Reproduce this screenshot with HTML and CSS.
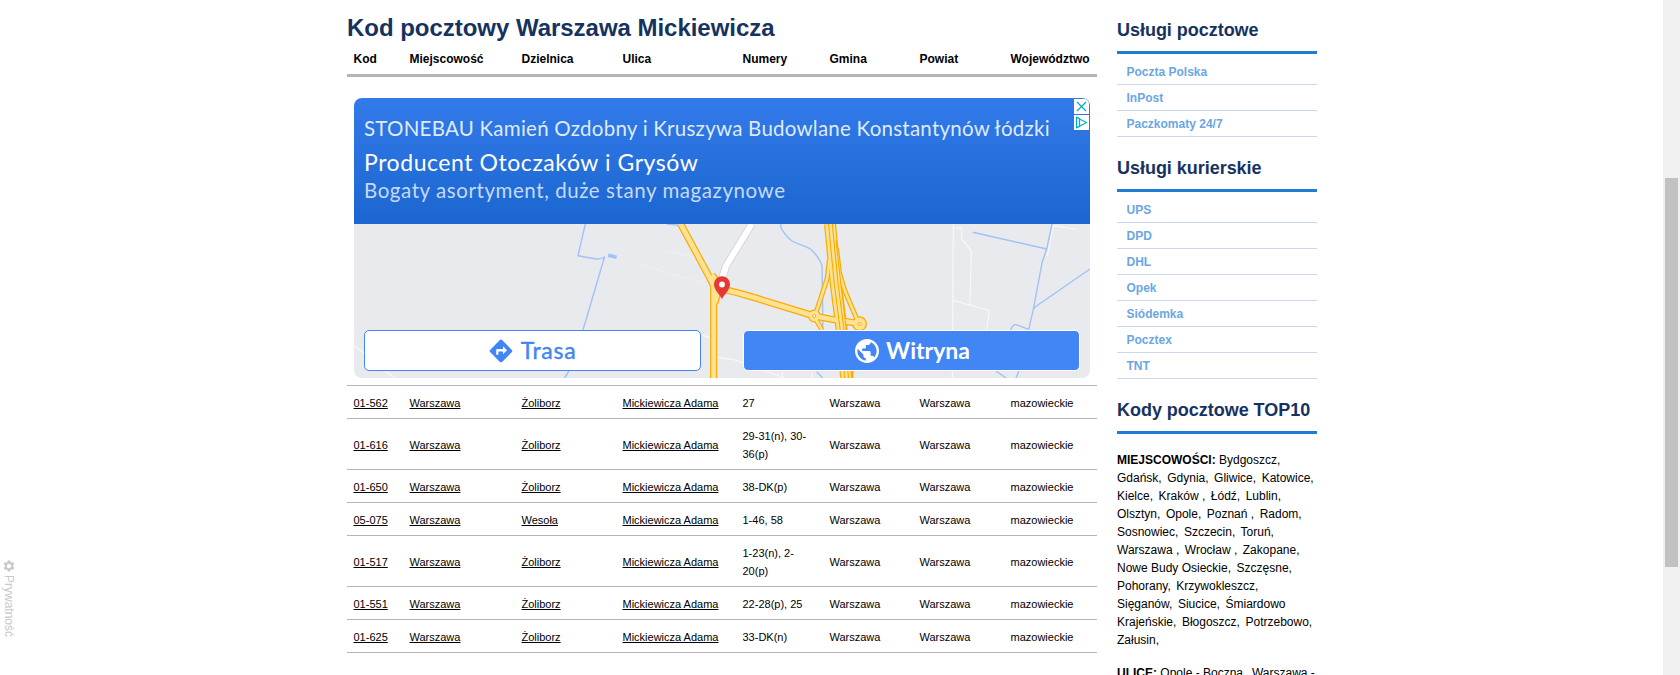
FILE: index.html
```html
<!DOCTYPE html>
<html lang="pl">
<head>
<meta charset="utf-8">
<title>Kod pocztowy Warszawa Mickiewicza</title>
<link rel="stylesheet" href="styles.css">
</head>
<body>
<div class="page">
  <main class="main">
    <h1 class="title">Kod pocztowy Warszawa Mickiewicza</h1>
    <table class="codes">
      <colgroup><col class="c-code"><col class="c-town"><col class="c-district"><col class="c-street"><col class="c-numbers"><col class="c-commune"><col class="c-county"><col class="c-region"></colgroup>
      <thead>
        <tr><th>Kod</th><th>Miejscowość</th><th>Dzielnica</th><th>Ulica</th><th>Numery</th><th>Gmina</th><th>Powiat</th><th>Województwo</th></tr>
      </thead>
      <tbody>
        <tr><td colspan="8" class="ad-cell">
          <div class="ad">
            <div class="ad-head">
              <div class="ad-name">STONEBAU Kamień Ozdobny i Kruszywa Budowlane Konstantynów łódzki</div>
              <div class="ad-title">Producent Otoczaków i Grysów</div>
              <div class="ad-desc">Bogaty asortyment, duże stany magazynowe</div>
              <div class="ad-controls">
                <svg class="ad-control" viewBox="0 0 15 15"><path d="M3 3l9 9M12 3l-9 9" fill="none" stroke="#00aecd" stroke-width="1.3"/></svg>
                <svg class="ad-control" viewBox="0 0 15 15"><path d="M2.500 2.200v10.600l3-1.400V3.600zM5.500 4v7.200l7-3.700z" fill="none" stroke="#00aecd" stroke-width="1.3" stroke-linejoin="round"/></svg>
              </div>
            </div>
            <div class="ad-map">
              <svg class="map" viewBox="354 224 736 154">
                <g fill="none" stroke="#f8f9fa" stroke-width="1.1">
                  <path d="M953.300 224L952.300 378M953 228l8.300-.5.4 11 9.600 12.300-1.300 54M952.300 300.300l35 9.500 2 2-3 20M1076.700 229.300l-23.400-3.600-6 30M354 345.500l12 9M385 371l10 7M701.700 335l10 3M715 357l20 3 50 18M783 372l-2 6M812 373v5"/>
                  <path d="M640 265l68 19M666 254l3-3 30 8-4 5" stroke-opacity=".4"/>
                </g>
                <g fill="none" stroke="#a0c2f9" stroke-width="1.4" stroke-linejoin="round">
                  <path d="M585.300 224L578 255.700l17 3q5 1 9.500-1.700L583 330M569 371l-4.500 7M667 224l12 1.200"/>
                  <path d="M780.700 224v3q4 8 10 13c7 5 18 6 22 11q8 9 9.300 15l.7 47v17M816.700 371.700l6 6.300"/>
                  <path d="M972.700 232.300l74 16.700M1052 224l-5.300 25-4.400 12.700-9 47.600-4.600 20-12-4.500q-4-1-6 5.200M1090 269l-55 38-2 3M996 371l10 7M1019 371l-3 7"/>
                </g>
                <path d="M608.500 253.500l8.500 2-.7 3.500-8.500-2z" fill="#a0c2f9"/>
                <path d="M751.700 224L726 266l-5 16" fill="none" stroke="#d5d7da" stroke-width="8"/>
                <path d="M751.700 224L726 266l-5 16" fill="none" stroke="#fff" stroke-width="6"/>
                <g fill="none" stroke="#f9ab00" stroke-linejoin="round">
                  <path d="M723 289.300q14 3 27 7l57 17.500 7 2.200 16 3 30 4.700" stroke-width="7.200"/>
                  <path d="M829.300 260l-2 18-10 31-3.300 7 8 14M836.500 248l3 25 5 17 14 33" stroke-width="5"/>
                  <path d="M680.700 224l27 50 6 12v92" stroke-width="7.200"/>
                  <path d="M712 275l8 10-5 18" stroke-width="7"/>
                  <path d="M830 224l5.700 59 6 47 4.500 48" stroke-width="12"/>
                  <path d="M852.800 371l-.6 7" stroke-width="2"/>
                </g>
                <circle cx="814.300" cy="316" r="6.500" fill="#f9ab00"/><circle cx="859.500" cy="323.800" r="7.500" fill="#f9ab00"/>
                <g fill="none" stroke="#fde293" stroke-linejoin="round">
                  <path d="M723 289.300q14 3 27 7l57 17.500 7 2.200 16 3 30 4.700" stroke-width="4.800"/>
                  <path d="M829.300 260l-2 18-10 31-3.300 7 8 14M836.500 248l3 25 5 17 14 33" stroke-width="2.600"/>
                  <path d="M680.700 224l27 50 6 12v92" stroke-width="4.800"/>
                  <path d="M712 275l8 10-5 18" stroke-width="4.500"/>
                  <path d="M830 224l5.700 59 6 47 4.500 48" stroke-width="9.600"/>
                </g>
                <circle cx="814.300" cy="316" r="5.200" fill="#fde293"/><circle cx="859.500" cy="323.800" r="6.200" fill="#fde293"/>
                <g fill="none" stroke="#f9ab00" stroke-width="1.100">
                  <path d="M828.500 224l5.700 59 6 47 4.500 48M832.300 224l5.700 59 6 47 4.500 48M836 240l4.800 43 5.500 47"/>
                </g>
                <circle cx="814.300" cy="316" r="1.500" fill="#fff" stroke="#f9ab00"/><circle cx="859.500" cy="323.800" r="1.500" fill="#fff" stroke="#f9ab00"/>
                <path d="M722 276.200a8 8 0 0 0-8 8c0 6 5.500 9.500 8 15.100 2.500-5.600 8-9.100 8-15.100a8 8 0 0 0-8-8z" fill="#e53935"/>
                <circle cx="722" cy="284.500" r="2.900" fill="#fff"/>
              </svg>
              <div class="ad-actions">
                <div class="btn btn-route">
                  <svg class="btn-icon" viewBox="0 0 24 24"><path d="M22.900 10.900L13.100 1.100a1.560 1.560 0 0 0-2.200 0L1.100 10.900a1.560 1.560 0 0 0 0 2.200l9.800 9.800c.6.600 1.600.6 2.200 0l9.800-9.800c.6-.6.600-1.600 0-2.200z" fill="#4285f4"/><path d="M14 15.200V12.400H9.400v3.300H7.200v-4.400q0-1.200 1.200-1.200H14V7.300l4 3.950z" fill="#fff"/></svg>
                  <span>Trasa</span>
                </div>
                <div class="btn btn-site">
                  <svg class="btn-icon" viewBox="2 2 20 20"><path fill="#fff" d="M12 2C6.480 2 2 6.480 2 12s4.480 10 10 10 10-4.480 10-10S17.520 2 12 2zm-1 17.930c-3.950-.49-7-3.850-7-7.930 0-.62.080-1.210.21-1.790L9 15v1c0 1.100.9 2 2 2v1.930zm6.900-2.540c-.26-.81-1-1.390-1.900-1.390h-1v-3c0-.55-.45-1-1-1H8v-2h2c.55 0 1-.45 1-1V7h2c1.100 0 2-.9 2-2v-.41c2.930 1.190 5 4.060 5 7.410 0 2.080-.8 3.970-2.100 5.390z"/></svg>
                  <span>Witryna</span>
                </div>
              </div>
            </div>
          </div>
        </td></tr>
        <tr><td><a>01-562</a></td><td><a>Warszawa</a></td><td><a>Żoliborz</a></td><td><a>Mickiewicza Adama</a></td><td>27</td><td>Warszawa</td><td>Warszawa</td><td>mazowieckie</td></tr>
        <tr><td><a>01-616</a></td><td><a>Warszawa</a></td><td><a>Żoliborz</a></td><td><a>Mickiewicza Adama</a></td><td>29-31(n), 30-<br>36(p)</td><td>Warszawa</td><td>Warszawa</td><td>mazowieckie</td></tr>
        <tr><td><a>01-650</a></td><td><a>Warszawa</a></td><td><a>Żoliborz</a></td><td><a>Mickiewicza Adama</a></td><td>38-DK(p)</td><td>Warszawa</td><td>Warszawa</td><td>mazowieckie</td></tr>
        <tr><td><a>05-075</a></td><td><a>Warszawa</a></td><td><a>Wesoła</a></td><td><a>Mickiewicza Adama</a></td><td>1-46, 58</td><td>Warszawa</td><td>Warszawa</td><td>mazowieckie</td></tr>
        <tr><td><a>01-517</a></td><td><a>Warszawa</a></td><td><a>Żoliborz</a></td><td><a>Mickiewicza Adama</a></td><td>1-23(n), 2-<br>20(p)</td><td>Warszawa</td><td>Warszawa</td><td>mazowieckie</td></tr>
        <tr><td><a>01-551</a></td><td><a>Warszawa</a></td><td><a>Żoliborz</a></td><td><a>Mickiewicza Adama</a></td><td>22-28(p), 25</td><td>Warszawa</td><td>Warszawa</td><td>mazowieckie</td></tr>
        <tr><td><a>01-625</a></td><td><a>Warszawa</a></td><td><a>Żoliborz</a></td><td><a>Mickiewicza Adama</a></td><td>33-DK(n)</td><td>Warszawa</td><td>Warszawa</td><td>mazowieckie</td></tr>
      </tbody>
    </table>
  </main>
  <aside class="side">
    <h2>Usługi pocztowe</h2>
    <ul><li>Poczta Polska</li><li>InPost</li><li>Paczkomaty 24/7</li></ul>
    <h2>Usługi kurierskie</h2>
    <ul><li>UPS</li><li>DPD</li><li>DHL</li><li>Opek</li><li>Siódemka</li><li>Pocztex</li><li>TNT</li></ul>
    <h2>Kody pocztowe TOP10</h2>
    <p><b>MIEJSCOWOŚCI:</b> Bydgoszcz,<br>
    <span>Gdańsk, Gdynia, Gliwice, Katowice,</span><br>
    <span>Kielce, Kraków<i> ,</i> Łódź, Lublin,</span><br>
    <span>Olsztyn, Opole, Poznań<i> ,</i> Radom,</span><br>
    <span>Sosnowiec, Szczecin, Toruń,</span><br>
    <span>Warszawa<i> ,</i> Wrocław<i> ,</i> Zakopane,</span><br>
    <span><i>Nowe Budy Osieckie,</i> Szczęsne,</span><br>
    <span>Pohorany, Krzywokleszcz,</span><br>
    <span>Sięganów, Siucice, Śmiardowo</span><br>
    <span>Krajeńskie, Błogoszcz, Potrzebowo,</span><br>
    <span>Załusin,</span></p>
    <p><b>ULICE:</b> Opole - Boczna<span>, </span>Warszawa -</p>
  </aside>
</div>
<div class="privacy">
  <svg class="gear" viewBox="0 0 24 24"><path fill-rule="evenodd" fill="#c8c8c8" d="M9.500 1h5l.6 3.200 1.900 1.100 3.100-1.100 2.500 4.300L20.100 10.600v2.800l2.500 2.100-2.500 4.300-3.100-1.100-1.900 1.100-.6 3.200h-5l-.6-3.200L7 18.700l-3.100 1.100-2.500-4.300 2.500-2.100v-2.800L1.400 8.500l2.500-4.300L7 5.300l1.900-1.100zM12 7.500a4.500 4.500 0 1 0 0 9 4.500 4.500 0 0 0 0-9z"/></svg>
  <span>Prywatność</span>
</div>
<div class="scrollbar"><div class="thumb"></div></div>
</body>
</html>
```
FILE: styles.css
```css
* { box-sizing: border-box; }
body {
  margin: 0;
  height: 675px;
  overflow: hidden;
  background: #fff;
  color: #000;
  font-family: "Liberation Sans", Arial, sans-serif;
  font-size: 12px;
  line-height: 18px;
}
.page {
  display: flex;
  gap: 20px;
  width: 970px;
  margin-left: 347px;
  height: 675px;
  overflow: hidden;
}
.main { width: 750px; }
.title {
  margin: 0;
  padding-top: 12px;
  height: 43px;
  font-size: 24px;
  line-height: 32px;
  letter-spacing: -.03px;
  color: #16325f;
  white-space: nowrap;
}
.codes {
  width: 750px;
  table-layout: fixed;
  border-collapse: separate;
  border-spacing: 0;
}
.c-code { width: 56px; }
.c-town { width: 112px; }
.c-district { width: 101px; }
.c-street { width: 120px; }
.c-numbers { width: 87px; }
.c-commune { width: 90px; }
.c-county { width: 91px; }
.c-region { width: 93px; }
.codes th {
  height: 34px;
  padding: 7px 0 6px 6.500px;
  border-bottom: 3px solid #b5b5b5;
  text-align: left;
  vertical-align: top;
}
.codes td {
  padding: 8px 0 6px 6.500px;
  border-bottom: 1px solid #b5b5b5;
  font-size: 11px;
  white-space: nowrap;
}
.codes a { text-decoration: underline; }
.codes .ad-cell { padding: 21px 7px 7px; }
.ad {
  height: 280px;
  border-radius: 8px;
  overflow: hidden;
  font-family: Lato, "Open Sans", sans-serif;
  white-space: nowrap;
}
.ad-head {
  position: relative;
  height: 126px;
  padding: 16px 10px 0;
  background: linear-gradient(#327ae9, #1b66d0);
}
.ad-name { font-size: 20.500px; line-height: 28px; color: #dfeafc; letter-spacing: .245px; }
.ad-title { margin-top: 5px; font-size: 23px; line-height: 30px; color: #fff; letter-spacing: .56px; }
.ad-desc { font-size: 20.500px; line-height: 26px; color: #c6dafa; letter-spacing: .57px; }
.ad-controls {
  position: absolute;
  top: 1px;
  right: 1px;
  display: grid;
  gap: 1px;
}
.ad-control { display: block; width: 15px; height: 15px; background: #fff; }
.ad-control:first-child { border-top-right-radius: 5px; }
.ad-map { position: relative; height: 154px; background: #e8eaed; }
.map { display: block; width: 736px; height: 154px; }
.ad-actions {
  position: absolute;
  left: 10px;
  right: 10px;
  bottom: 7px;
  display: flex;
  justify-content: space-between;
}
.btn {
  display: flex;
  align-items: center;
  justify-content: center;
  gap: 8px;
  width: 337px;
  height: 41px;
  border: 1px solid #4285f4;
  border-radius: 5px;
  background: #fff;
  color: #4285f4;
  font-size: 23px;
  line-height: 30px;
}
.btn span { padding-bottom: 2px; }
.btn-route span { -webkit-text-stroke: .4px #4285f4; letter-spacing: .7px; }
.btn-site { gap: 7px; padding-left: 2px; border-color: #fff; background: #4285f4; color: #fff; font-weight: 700; }
.btn-icon { width: 24px; height: 24px; }
.side { width: 200px; white-space: nowrap; }
.side h2 {
  margin: 0;
  height: 55px;
  padding-top: 20px;
  border-bottom: 3px solid #1f7bd4;
  font-size: 18px;
  line-height: 22px;
  letter-spacing: -.03px;
  color: #16325f;
}
.side h2:first-child { height: 54px; padding-top: 19px; }
.side ul { margin: 0; padding: 5px 0 0; list-style: none; }
.side li {
  height: 26px;
  padding: 4px 0 0 9.500px;
  border-bottom: 1px solid #ccd8ea;
  color: #6ba6e2;
  font-weight: 700;
}
.side p { margin: 0 0 15px; }
.side h2 + p { margin-top: 17px; }
.side p span { word-spacing: 2.200px; }
.side i { font-style: normal; word-spacing: 0; }
.privacy {
  position: absolute;
  left: 2px;
  top: 560px;
  display: flex;
  align-items: center;
  gap: 3px;
  writing-mode: vertical-rl;
  color: #c8c8c8;
  font-size: 12px;
  line-height: 13px;
}
.gear { width: 12px; height: 12px; }
.scrollbar {
  position: absolute;
  top: 0;
  right: 0;
  width: 17px;
  height: 675px;
  padding: 178px 2px 0;
  background: #f1f1f1;
}
.thumb { width: 13px; height: 389px; background: #c1c1c1; }
```
